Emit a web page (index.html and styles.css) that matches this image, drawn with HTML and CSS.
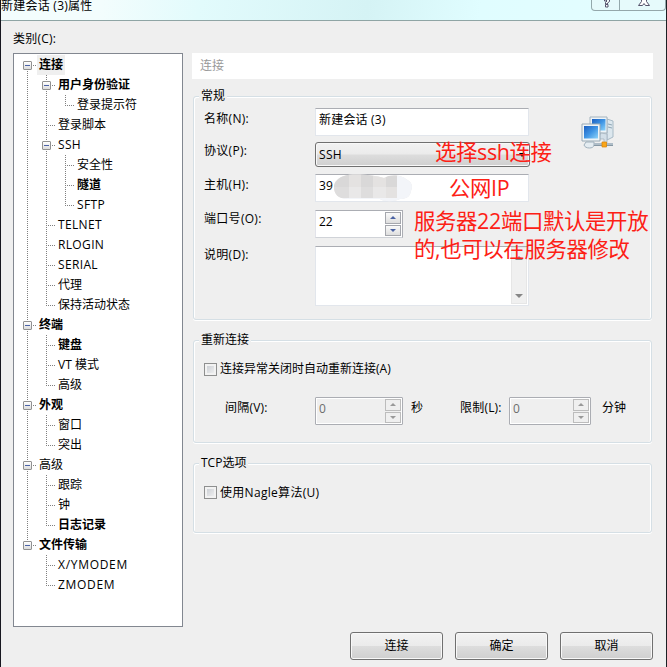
FILE: index.html
```html
<!DOCTYPE html>
<html lang="zh-CN">
<head>
	<meta charset="UTF-8">
	<title>新建会话 (3)属性</title>
	<link rel="stylesheet" href="styles.css">
</head>
<body>
	<div class="window">
		<div class="titlebar">
			<span class="title">新建会话 (3)属性</span>
			<div class="window-buttons">
				<span class="help">
					<svg width="8" height="8" viewBox="0 0 8 8"><path d="M1.5 0v1h2V0M6.500 0v1.500L4.500 3v1h-2V2.500L4 1M2.500 4.500h2.500v2.500h-2.500z" fill="#fff" stroke="#55536b"/></svg>
				</span>
				<span class="close">
					<svg width="12" height="7" viewBox="0 0 12 7"><path d="M3.500 0v1.500L.5 5.500h4L6 3.500l1.500 2h4L8.500 1.500V0" fill="#fff" stroke="#55536b"/></svg>
				</span>
			</div>
		</div>
		<div class="content">
			<div class="main">
				<div class="sidebar">
					<div class="category">类别(C):</div>
					<ul class="tree">
						<li>
							<div class="node"><i class="toggle"></i><b class="selected">连接</b></div>
							<ul>
								<li>
									<div class="node"><i class="toggle"></i><b>用户身份验证</b></div>
									<ul>
										<li><div class="node leaf"><span>登录提示符</span></div></li>
									</ul>
								</li>
								<li><div class="node leaf"><span>登录脚本</span></div></li>
								<li>
									<div class="node"><i class="toggle"></i><span class="en">SSH</span></div>
									<ul>
										<li><div class="node leaf"><span>安全性</span></div></li>
										<li><div class="node leaf"><b>隧道</b></div></li>
										<li><div class="node leaf"><span class="en">SFTP</span></div></li>
									</ul>
								</li>
								<li><div class="node leaf"><span class="en">TELNET</span></div></li>
								<li><div class="node leaf"><span class="en">RLOGIN</span></div></li>
								<li><div class="node leaf"><span class="en">SERIAL</span></div></li>
								<li><div class="node leaf"><span>代理</span></div></li>
								<li><div class="node leaf"><span>保持活动状态</span></div></li>
							</ul>
						</li>
						<li>
							<div class="node"><i class="toggle"></i><b>终端</b></div>
							<ul>
								<li><div class="node leaf"><b>键盘</b></div></li>
								<li><div class="node leaf"><span>VT 模式</span></div></li>
								<li><div class="node leaf"><span>高级</span></div></li>
							</ul>
						</li>
						<li>
							<div class="node"><i class="toggle"></i><b>外观</b></div>
							<ul>
								<li><div class="node leaf"><span>窗口</span></div></li>
								<li><div class="node leaf"><span>突出</span></div></li>
							</ul>
						</li>
						<li>
							<div class="node"><i class="toggle"></i><span>高级</span></div>
							<ul>
								<li><div class="node leaf"><span>跟踪</span></div></li>
								<li><div class="node leaf"><span>钟</span></div></li>
								<li><div class="node leaf"><b>日志记录</b></div></li>
							</ul>
						</li>
						<li>
							<div class="node"><i class="toggle"></i><b>文件传输</b></div>
							<ul>
								<li><div class="node leaf"><span class="en wide">X/YMODEM</span></div></li>
								<li><div class="node leaf"><span class="en wide">ZMODEM</span></div></li>
							</ul>
						</li>
					</ul>
				</div>
				<div class="panel">
					<div class="panel-title">连接</div>

					<fieldset class="general">
						<legend>常规</legend>
						<div class="form">
							<div class="row">
								<label>名称(N):</label>
								<div class="field">新建会话 (3)</div>
							</div>
							<div class="row protocol">
								<label>协议(P):</label>
								<div class="combo"><span class="en">SSH</span><i class="arrow"></i></div>
								<span class="note note-ssh">选择ssh连接</span>
							</div>
							<div class="row host">
								<label>主机(H):</label>
								<div class="field">39</div>
								<svg class="mosaic" width="80" height="28" viewBox="0 0 80 28">
									<clipPath id="blob"><path d="M10 2C18-1 40 1 50 4C56 0 68 1 72 5C78 8 79 12 77 17C76 23 72 25 66 25C60 28 50 28 46 25H14C4 25 0 20 0 13C0 8 4 4 10 2z"/></clipPath>
									<g clip-path="url(#blob)">
										<path fill="#e9e8e8" d="M0 0h80v28H0z"/>
										<path fill="#d9d8d8" d="M0 0h15v13H0zM27 0h12v13H27zM52 0h11v13H52z"/>
										<path fill="#dedddd" d="M0 13h15v11H0zM27 13h12v11H27z"/>
										<path fill="#e4e2e1" d="M15 0h12v13H15zM39 0h13v13H39zM52 13h11v11H52z"/>
										<path fill="#f3f5f9" d="M63 0h17v28H63zM0 24h80v4H0z"/>
									</g>
								</svg>
								<span class="note note-ip">公网IP</span>
							</div>
							<div class="row port">
								<label>端口号(O):</label>
								<div class="spinner">
									<span>22</span>
									<div class="arrows"><i class="up"></i><i class="down"></i></div>
								</div>
								<span class="note note-port">服务器22端口默认是开放<br>的,也可以在服务器修改</span>
							</div>
							<div class="row desc">
								<label>说明(D):</label>
								<div class="textarea"><div class="scrollbar"><i class="up"></i><i class="down"></i></div></div>
							</div>
						</div>
						<svg class="net-icon" width="34" height="34" viewBox="0 0 34 34">
							<defs>
								<linearGradient id="screen" x1="0" y1="0" x2="1" y2="1">
									<stop offset="0" stop-color="#1c5fc0"/>
									<stop offset=".5" stop-color="#3e94e4"/>
									<stop offset="1" stop-color="#8ed4fa"/>
								</linearGradient>
							</defs>
							<path d="M26 3l6 2v16l-6 3z" fill="#dce7ee" stroke="#a8bac6"/>
							<path d="M27 8l4 1M27 11l4 1" stroke="#8fa6b5"/>
							<path d="M9 1h17v16H9z" fill="#eef4f8" stroke="#a3b2bd"/>
							<path d="M11 3h13.500v11.500H11z" fill="url(#screen)"/>
							<path d="M20 17l-4 6h7v4h3v-9z" fill="#d3dfe8" stroke="#a0b0bc" stroke-width=".7"/>
							<path d="M5 26h8v3c0 4-9 4-10 0z" fill="#e4ecf1" stroke="#a0b0bc"/>
							<path d="M1 8h18v17H1z" fill="#f0f5f8" stroke="#98a9b5"/>
							<path d="M3 10h14v12.500H3z" fill="url(#screen)"/>
							<path d="M13 28.500h19" stroke="#8798a5" stroke-width="3"/>
							<path d="M13 28h19" stroke="#d5e1e9"/>
							<path d="M21 26h4.500v5H21z" fill="#f9a61a" stroke="#d98208" stroke-width=".7"/>
						</svg>
					</fieldset>

					<fieldset class="reconnect">
						<legend>重新连接</legend>
						<label class="check"><i class="box"></i>连接异常关闭时自动重新连接(A)</label>
						<div class="limits">
							<label class="interval">间隔(V):</label>
							<div class="spinner disabled">
								<span>0</span>
								<div class="arrows"><i class="up"></i><i class="down"></i></div>
							</div>
							<span class="seconds">秒</span>
							<label class="limit">限制(L):</label>
							<div class="spinner disabled short">
								<span>0</span>
								<div class="arrows"><i class="up"></i><i class="down"></i></div>
							</div>
							<span class="minutes">分钟</span>
						</div>
					</fieldset>

					<fieldset class="tcp">
						<legend>TCP选项</legend>
						<label class="check"><i class="box"></i><span class="nagle">使用Nagle算法(U)</span></label>
					</fieldset>
				</div>
			</div>
			<div class="footer">
				<button>连接</button>
				<button>确定</button>
				<button>取消</button>
			</div>
		</div>
	</div>
</body>
</html>
```
FILE: styles.css
```css
* {
	box-sizing: border-box;
}
body {
	margin: 0;
	font-family: "Open Sans", "Noto Sans CJK SC", sans-serif;
	font-size: 12px;
	line-height: 18px;
	color: #000;
	overflow: hidden;
}
i {
	display: block;
}
.window {
	width: 667px;
	height: 667px;
	background: #efefef;
	border-left: 1px solid #17171f;
	border-right: 1px solid #1c2024;
}
.titlebar {
	display: flex;
	justify-content: space-between;
	align-items: flex-start;
	height: 21px;
	background: linear-gradient(100deg, #f3fdfd 15%, #e2fbfc 30%, #d5f3f5 55%, #e0fdff 72%, #e4fdff);
	border-bottom: 1px solid #8fa5a5;
}
.title {
	height: 14px;
	line-height: 12px;
	letter-spacing: 0.25px;
}
.window-buttons {
	display: flex;
	width: 75px;
	height: 11px;
	border: 1px solid #94a8ab;
	border-top: none;
	border-radius: 0 0 4px 4px;
	background: #e6fafb;
}
.help {
	width: 28px;
	height: 10px;
	padding-left: 11px;
	border-right: 1px solid #94a8ab;
	line-height: 0;
}
.close {
	padding-left: 18px;
	line-height: 0;
}
.content {
	height: 646px;
	padding: 8px 13px 0 12px;
}
.main {
	display: flex;
	gap: 9px;
}
.category {
	height: 24px;
	line-height: 20px;
	letter-spacing: 0.2px;
}
.en {
	letter-spacing: 0.35px;
}
.en.wide {
	letter-spacing: 0.7px;
}

/* tree */
ul {
	list-style: none;
	margin: 0;
	padding: 0;
}
.tree {
	width: 170px;
	height: 574px;
	padding: 1px 0 0 9px;
	background: #fff;
	border: 1px solid #828790;
}
.tree ul {
	margin-left: 19px;
}
.tree li {
	background: repeating-linear-gradient(#808080 0 1px, transparent 1px 2px) 4px 0 / 1px 100% no-repeat;
}
.tree li:last-child {
	background-size: 1px 10px;
}
.tree > li:first-child {
	background-position: 4px 10px;
}
.node {
	display: flex;
	align-items: center;
	height: 20px;
	background: repeating-linear-gradient(90deg, #808080 0 1px, transparent 1px 2px) 4px 10px / 9px 1px no-repeat;
}
.node.leaf {
	padding-left: 9px;
}
.node b,
.node span {
	margin-left: 5px;
	padding: 0 2px;
	height: 20px;
	line-height: 19px;
}
.node .selected {
	background: #efefef;
}
.toggle {
	width: 9px;
	height: 9px;
	border: 1px solid #919191;
	border-radius: 1px;
	background: linear-gradient(#4b63a7, #4b63a7) center / 5px 1px no-repeat, linear-gradient(#fff, #dcdcdc);
}

/* right side */
.panel {
	width: 462px;
	padding-top: 24px;
}
.panel-title {
	height: 26px;
	padding-left: 8px;
	line-height: 25px;
	background: #fff;
	color: #999;
}
fieldset {
	margin: 0 1px;
	padding: 0 0 0 11px;
	width: 459px;
	border: 1px solid #d5dfe5;
	border-radius: 3px;
	box-shadow: inset 1px 1px 0 #fff, inset -1px 0 0 #fff, 0 1px 0 #fff;
}
legend {
	margin-left: -6px;
	padding: 0 2px;
	height: 18px;
	background: #efefef;
}
.general {
	display: flex;
	height: 233px;
	margin-top: 8px;
	padding-top: 3px;
}
.row {
	display: flex;
	position: relative;
	margin-bottom: 7px;
}
.row label {
	width: 111px;
	padding-top: 2px;
	margin-left: -1px;
	letter-spacing: 0.3px;
}
.field {
	width: 214px;
	height: 28px;
	padding: 2px 3px;
	background: #fff;
	border: 1px solid #e2e6ec;
	border-top-color: #abadb3;
	letter-spacing: 0.2px;
}
.protocol {
	margin-top: -1px;
}
.protocol label {
	padding-top: 0;
}
.combo {
	display: flex;
	justify-content: space-between;
	align-items: center;
	width: 215px;
	height: 25px;
	padding: 0 4px 0 3px;
	border: 1px solid #707070;
	border-radius: 3px;
	background: linear-gradient(#f2f2f2, #ebebeb 49%, #dddddd 51%, #cfcfcf);
	box-shadow: inset 0 0 0 1px #f8f8f8;
}
.arrow {
	border: 3px solid transparent;
	border-top: 4px solid #000;
	border-bottom: none;
}
.host {
	margin-bottom: 8px;
}
.spinner {
	display: flex;
	justify-content: space-between;
	width: 88px;
	height: 28px;
	padding: 1px;
	background: #fff;
	border: 1px solid #abadb3;
	border-left-color: #e2e3ea;
	border-bottom-color: #d0d3d8;
}
.spinner > span {
	padding: 1px 2px;
}
.arrows {
	display: flex;
	flex-direction: column;
	gap: 1px;
	width: 16px;
}
.arrows i {
	display: flex;
	flex: 1;
	align-items: center;
	justify-content: center;
	border: 1px solid #a5a7ad;
	background: linear-gradient(#fafafa, #dedede);
}
.arrows i::before {
	content: "";
	border: 3px solid transparent;
	border-top-width: 0;
	border-bottom: 3px solid #4a62a3;
}
.arrows .down::before {
	border-top: 3px solid #4a62a3;
	border-bottom-width: 0;
}
.spinner.disabled {
	background: #efefef;
	border-color: #abadb3;
	border-radius: 1px;
	box-shadow: inset 0 0 0 1px #fff;
	color: #6d6d6d;
}
.disabled .arrows i {
	background: #efefef;
	border-color: #bcbcbc;
}
.disabled .arrows .up::before {
	border-bottom-color: #999;
}
.disabled .arrows .down::before {
	border-top-color: #999;
}
.spinner.short {
	width: 82px;
}
.desc {
	margin-top: 8px;
	margin-bottom: 0;
}
.port label,
.desc label {
	padding-top: 0;
}
.textarea {
	display: flex;
	justify-content: flex-end;
	width: 214px;
	height: 60px;
	padding: 0 1px 1px 0;
	background: #fff;
	border: 1px solid #e2e6ec;
	border-top-color: #abadb3;
}
.scrollbar {
	display: flex;
	flex-direction: column;
	align-items: center;
	justify-content: space-between;
	width: 16px;
	padding: 8px 0 5px;
	background: #f0f0f0;
	border: 1px solid #e6e6e6;
}
.scrollbar .up {
	border: 4px solid transparent;
	border-top: none;
	border-bottom-color: #868686;
}
.scrollbar .down {
	border: 4px solid transparent;
	border-bottom: none;
	border-top-color: #868686;
}
.mosaic {
	position: absolute;
	left: 129px;
	top: 0;
}
.note {
	position: absolute;
	z-index: 1;
	font-size: 21.4px;
	line-height: 28px;
	letter-spacing: -0.35px;
	color: #fd2015;
	white-space: nowrap;
}
.note-ssh {
	left: 230px;
	top: -4px;
}
.note-ip {
	left: 244px;
	top: 0;
}
.note-port {
	left: 209px;
	top: -3px;
}
.net-icon {
	margin: 8px 0 0 51px;
}
.reconnect {
	height: 112px;
	margin-top: 11px;
}
.check {
	display: flex;
	align-items: center;
	gap: 3px;
	margin: 11px 0 0 -1px;
}
.nagle {
	padding-top: 1px;
	letter-spacing: 0.3px;
}
.box {
	width: 13px;
	height: 13px;
	border: 1px solid #8e8f8f;
	background: linear-gradient(135deg, #c4c8ce, #f6f6f6);
	box-shadow: inset 0 0 0 2px #f2f2f2;
}
.limits {
	display: flex;
	margin-top: 19px;
}
.limits > label,
.limits > span {
	padding-top: 2px;
}
.interval {
	width: 90px;
	margin-left: 20px;
	letter-spacing: 0.2px;
}
.seconds {
	width: 49px;
	margin-left: 8px;
}
.limit {
	width: 49px;
	letter-spacing: 0.2px;
}
.minutes {
	margin-left: 11px;
}
.tcp {
	height: 79px;
	margin-top: 11px;
}

/* bottom buttons */
.footer {
	display: flex;
	justify-content: flex-end;
	gap: 12px;
	margin-top: 5px;
}
button {
	width: 93px;
	height: 28px;
	padding: 0;
	font: inherit;
	color: #000;
	border: 1px solid #707070;
	border-radius: 3px;
	background: linear-gradient(#f2f2f2, #ebebeb 49%, #dddddd 51%, #cfcfcf);
	box-shadow: inset 0 0 0 1px #f8f8f8;
}
```
